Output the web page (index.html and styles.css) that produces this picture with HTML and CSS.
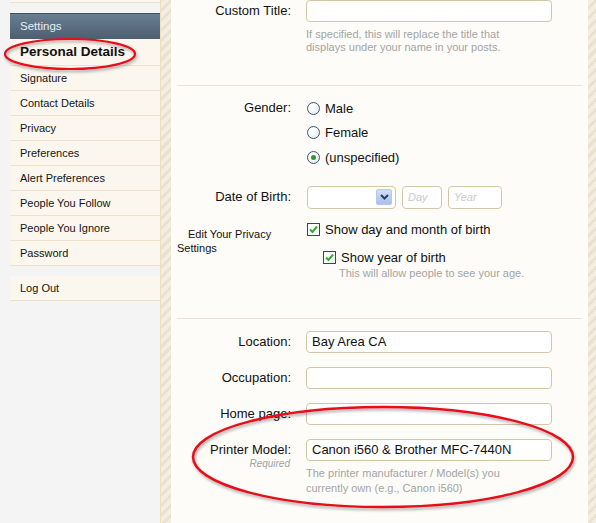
FILE: index.html
```html
<!DOCTYPE html>
<html>
<head>
<meta charset="utf-8">
<link rel="stylesheet" href="styles.css">
</head>
<body>
<div class="page">
  <aside class="sidebar">
    <div class="side-top"></div>
    <div class="side-head">Settings</div>
    <ul class="side-list">
      <li class="current">Personal Details</li>
      <li>Signature</li>
      <li>Contact Details</li>
      <li>Privacy</li>
      <li>Preferences</li>
      <li>Alert Preferences</li>
      <li>People You Follow</li>
      <li>People You Ignore</li>
      <li>Password</li>
    </ul>
    <ul class="side-list logout">
      <li>Log Out</li>
    </ul>
  </aside>
  <div class="stripe stripe-left"></div>
  <main class="content">
    <section class="block first">
      <div class="row">
        <div class="label">Custom Title:</div>
        <div class="ctrl">
          <div class="input"></div>
          <div class="hint">If specified, this will replace the title that<br>displays under your name in your posts.</div>
        </div>
      </div>
    </section>
    <section class="block second">
      <div class="row">
        <div class="label lh24">Gender:</div>
        <div class="ctrl">
          <div class="radio-line"><span class="radio"></span>Male</div>
          <div class="radio-line"><span class="radio"></span>Female</div>
          <div class="radio-line"><span class="radio on"><span class="dot"></span></span>(unspecified)</div>
        </div>
      </div>
      <div class="row dob">
        <div class="label">Date of Birth:</div>
        <div class="ctrl dob-ctrls">
          <div class="select"><span class="sel-btn"><svg width="9" height="6" viewBox="0 0 9 6"><path d="M1 1 L4.5 4.5 L8 1" fill="none" stroke="#2d3f63" stroke-width="2"/></svg></span></div>
          <div class="input small day">Day</div>
          <div class="input small year">Year</div>
        </div>
      </div>
      <div class="row privacy">
        <div class="label small-label">Edit Your Privacy Settings</div>
        <div class="ctrl">
          <div class="check-line"><span class="check"><svg width="11" height="11" viewBox="0 0 11 11"><path d="M2 5.5 L4.5 8 L9 2.5" fill="none" stroke="#2fae2f" stroke-width="2"/></svg></span>Show day and month of birth</div>
          <div class="check-line sub"><span class="check"><svg width="11" height="11" viewBox="0 0 11 11"><path d="M2 5.5 L4.5 8 L9 2.5" fill="none" stroke="#2fae2f" stroke-width="2"/></svg></span>Show year of birth</div>
          <div class="hint sub-hint">This will allow people to see your age.</div>
        </div>
      </div>
    </section>
    <section class="block third">
      <div class="row">
        <div class="label">Location:</div>
        <div class="ctrl"><div class="input">Bay Area CA</div></div>
      </div>
      <div class="row">
        <div class="label">Occupation:</div>
        <div class="ctrl"><div class="input"></div></div>
      </div>
      <div class="row">
        <div class="label">Home page:</div>
        <div class="ctrl"><div class="input"></div></div>
      </div>
      <div class="row">
        <div class="label">Printer Model:<span class="req">Required</span></div>
        <div class="ctrl">
          <div class="input">Canon i560 &amp; Brother MFC-7440N</div>
          <div class="hint printer-hint">The printer manufacturer / Model(s) you<br>currently own (e.g., Canon i560)</div>
        </div>
      </div>
    </section>
  </main>
  <div class="stripe stripe-right"></div>
</div>
<svg class="annot" width="596" height="523" viewBox="0 0 596 523">
  <defs>
    <filter id="sh" x="-10%" y="-30%" width="120%" height="160%">
      <feDropShadow dx="1" dy="2" stdDeviation="1.5" flood-color="#000" flood-opacity="0.35"/>
    </filter>
  </defs>
  <ellipse cx="70" cy="54" rx="65" ry="15" fill="none" stroke="#e8111a" stroke-width="2.2" filter="url(#sh)"/>
  <ellipse cx="383" cy="457" rx="190" ry="50" fill="none" stroke="#e8111a" stroke-width="2.5" filter="url(#sh)"/>
</svg>
</body>
</html>
```
FILE: styles.css
```css
* { box-sizing: border-box; }
html, body { margin: 0; padding: 0; }
body {
  width: 596px;
  height: 523px;
  overflow: hidden;
  background: #f4f4f4;
  font-family: "Liberation Sans", Arial, sans-serif;
  color: #000;
  position: relative;
}
.page {
  display: flex;
  height: 523px;
}
.sidebar {
  width: 150px;
  margin-left: 10px;
  flex: none;
}
.side-top {
  height: 3px;
  background: #fbf7ee;
  border-bottom: 1px solid #ece2cb;
}
.side-head {
  margin-top: 10px;
  height: 26px;
  background: linear-gradient(#6a7e91, #4b5f71);
  border-top: 1px solid #3f5163;
  color: #e6edf3;
  font-size: 11.5px;
  line-height: 25px;
  padding-left: 10px;
}
.side-list {
  list-style: none;
  margin: 0;
  padding: 0;
}
.side-list li {
  height: 25px;
  line-height: 24px;
  background: #fbf7ee;
  border-bottom: 1px solid #ece2cb;
  font-size: 11px;
  color: #141414;
  padding-left: 10px;
}
.side-list li.current {
  height: 27px;
  line-height: 26px;
  font-weight: bold;
  font-size: 13.5px;
  color: #111;
}
.logout { margin-top: 10px; }
.stripe {
  flex: none;
  background: repeating-linear-gradient(-45deg, #f3eee1 0 4px, #e9e2d0 4px 7px);
}
.stripe-left {
  width: 11px;
  border-left: 1px solid #ecdfc2;
}
.stripe-right {
  width: 8px;
}
.content {
  width: 417px;
  flex: none;
  background: #fdfcf8;
  padding: 0 6px;
}
.block { border-bottom: 1px solid #ebe4d3; }
.block.first { padding-bottom: 31px; }
.block.second { padding-top: 10px; padding-bottom: 38px; }
.block.third { padding-top: 12px; border-bottom: none; }
.row {
  display: grid;
  grid-template-columns: 114px 1fr;
  column-gap: 15px;
}
.block.third .row + .row { margin-top: 14px; }
.label {
  text-align: right;
  font-size: 13px;
  line-height: 22px;
  color: #111;
}
.label.lh24 { line-height: 24px; }
.input {
  width: 246px;
  height: 22px;
  background: #fff;
  border: 1px solid #d3c7a6;
  border-radius: 4px;
  font-size: 13px;
  line-height: 20px;
  padding-left: 5px;
  color: #111;
}
.hint {
  font-size: 11px;
  line-height: 13px;
  color: #a4a4a4;
}
.first .hint { margin-top: 6px; }
.radio-line {
  height: 24.5px;
  display: flex;
  align-items: center;
  font-size: 13px;
  color: #111;
}
.radio {
  width: 13px;
  height: 13px;
  border-radius: 50%;
  border: 1px solid #3f5470;
  background: radial-gradient(circle at 40% 35%, #fff 30%, #d8dde4 100%);
  margin: 0 5px 0 1px;
  display: flex;
  align-items: center;
  justify-content: center;
  flex: none;
}
.dot {
  width: 5px;
  height: 5px;
  border-radius: 50%;
  background: #2d9a2d;
}
.dob { margin-top: 16px; }
.dob-ctrls {
  display: flex;
  gap: 6px;
  padding-left: 1px;
}
.select {
  width: 89px;
  height: 23px;
  border: 1px solid #d3c7a6;
  border-radius: 4px;
  background: #fff;
  position: relative;
  display: flex;
  justify-content: flex-end;
  align-items: center;
  padding-right: 3px;
}
.sel-btn {
  width: 16px;
  height: 16px;
  border-radius: 2px;
  background: linear-gradient(#d3dff7, #a9bff0);
  border: 1px solid #b5c6ea;
  display: flex;
  align-items: center;
  justify-content: center;
}
.input.small {
  height: 23px;
  font-style: italic;
  font-size: 11px;
  line-height: 21px;
  color: #c9c9c9;
}
.day { width: 40px; }
.year { width: 54px; }
.privacy { margin-top: 10px; }
.small-label {
  text-align: left;
  font-size: 11px;
  line-height: 14px;
  padding-top: 8px;
  text-indent: 11px;
  padding-right: 14px;
}
.check-line {
  height: 18px;
  display: flex;
  align-items: center;
  font-size: 13px;
  color: #111;
  padding-top: 3px;
}
.check-line.sub {
  margin-top: 11px;
  padding-left: 16px;
  padding-top: 2px;
}
.check {
  width: 13px;
  height: 13px;
  border: 1px solid #1d4f7c;
  background: #fff;
  display: flex;
  align-items: center;
  justify-content: center;
  margin: 0 5px 0 1px;
  flex: none;
}
.sub-hint {
  padding-left: 33px;
  margin-top: 1px;
}
.req {
  display: block;
  font-size: 10px;
  font-style: italic;
  color: #a0a0a0;
  line-height: 6px;
  padding-right: 1px;
}
.printer-hint {
  margin-top: 5px;
  line-height: 15px;
}
.annot {
  position: absolute;
  left: 0;
  top: 0;
  pointer-events: none;
}
```
